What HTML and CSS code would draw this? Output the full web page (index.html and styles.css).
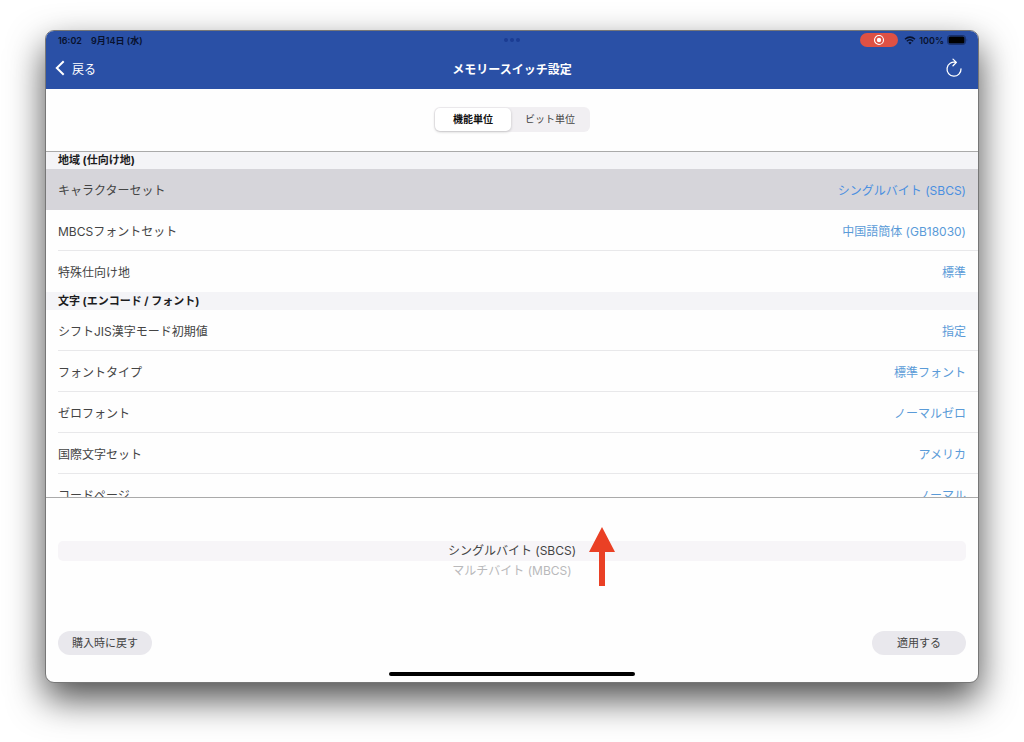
FILE: index.html
```
<!DOCTYPE html>
<html lang="ja">

<head>
    <meta charset="UTF-8">
    <meta name="viewport" content="width=device-width, initial-scale=1.0">
    <title>メモリースイッチ設定</title>
    <link rel="stylesheet" href="styles.css">
</head>

<body>
    <div class="tablet">
        <header class="header">
            <!-- Status bar -->
            <div class="status-bar">
                <div class="status-left">
                    <span>16:02</span>
                    <span>9月14日 (水)</span>
                </div>
                <svg class="dots" viewBox="0 0 18 4" aria-hidden="true">
                    <circle cx="3" cy="2" r="2" />
                    <circle cx="9" cy="2" r="2" />
                    <circle cx="15" cy="2" r="2" />
                </svg>
                <div class="status-right">
                    <span class="recording">
                        <svg viewBox="0 0 12 12" aria-hidden="true">
                            <circle cx="6" cy="6" r="4.5" fill="none" stroke="#fff" stroke-width="1.1" />
                            <circle cx="6" cy="6" r="2.2" fill="#fff" />
                        </svg>
                    </span>
                    <svg class="wifi" viewBox="0 0 12 9" aria-hidden="true">
                        <path d="M1 3.3Q6-1.1 11 3.3M2.8 5.2Q6 2.4 9.2 5.2" fill="none" stroke="currentColor" stroke-width="1.5" />
                        <path d="M4.3 6.7Q6 5.3 7.7 6.7L6 8.6z" fill="currentColor" />
                    </svg>
                    <span>100%</span>
                    <svg class="battery" viewBox="0 0 21 10" aria-hidden="true">
                        <rect x="0.5" y="0.5" width="18" height="9" rx="2.6" fill="none" stroke="#19316f" />
                        <rect x="1.5" y="1.5" width="16" height="7" rx="1.6" fill="#000" />
                        <path d="M19.7 3.6q1.2 1.4 0 2.8z" fill="#19316f" />
                    </svg>
                </div>
            </div>

            <!-- Navigation bar -->
            <nav class="nav-bar">
                <a href="#" class="back">
                    <svg viewBox="0 0 10 16" aria-hidden="true">
                        <path d="M8.7 1.2 1.8 8l6.9 6.8" fill="none" stroke="currentColor" stroke-width="2" />
                    </svg>
                    戻る
                </a>
                <h1>メモリースイッチ設定</h1>
                <button type="button" class="reload" aria-label="再読み込み">
                    <svg viewBox="0 0 18 20" aria-hidden="true">
                        <path d="M16 10.8A7 7 0 1 1 10.8 4.4M8 1.1l3.4 3.3-3.4 3.4" fill="none" stroke="currentColor" stroke-width="1.3" stroke-linecap="round" stroke-linejoin="round" />
                    </svg>
                </button>
            </nav>
        </header>

        <div class="tabs">
            <div class="segmented">
                <label><input type="radio" name="unit" checked><span>機能単位</span></label>
                <label><input type="radio" name="unit"><span>ビット単位</span></label>
            </div>
        </div>

        <main class="settings">
            <section class="group">
                <h2>地域 (仕向け地)</h2>
                <button type="button" class="row selected"><span>キャラクターセット</span><span class="value">シングルバイト (SBCS)</span></button>
                <button type="button" class="row"><span>MBCSフォントセット</span><span class="value">中国語簡体 (GB18030)</span></button>
                <button type="button" class="row"><span>特殊仕向け地</span><span class="value">標準</span></button>
            </section>
            <section class="group">
                <h2>文字 (エンコード / フォント)</h2>
                <button type="button" class="row"><span>シフトJIS漢字モード初期値</span><span class="value">指定</span></button>
                <button type="button" class="row"><span>フォントタイプ</span><span class="value">標準フォント</span></button>
                <button type="button" class="row"><span>ゼロフォント</span><span class="value">ノーマルゼロ</span></button>
                <button type="button" class="row"><span>国際文字セット</span><span class="value">アメリカ</span></button>
                <button type="button" class="row"><span>コードページ</span><span class="value">ノーマル</span></button>
            </section>
        </main>

        <footer class="footer">
            <div class="picker">
                <label><input type="radio" name="charset" checked><span>シングルバイト (SBCS)</span></label>
                <label><input type="radio" name="charset"><span>マルチバイト (MBCS)</span></label>
                <svg class="arrow" viewBox="0 0 26 59" aria-hidden="true">
                    <path d="M13 0 26 25h-10v34h-6V25H0z" fill="#ea4025" />
                </svg>
            </div>
            <div class="actions">
                <button type="button">購入時に戻す</button>
                <button type="button">適用する</button>
            </div>
            <div class="home-indicator"></div>
        </footer>
    </div>
</body>

</html>
```
FILE: styles.css
```
* {
    margin: 0;
    padding: 0;
    box-sizing: border-box;
}

body {
    height: 100vh;
    padding: 30px 45px 59px;
    background-color: #fff;
    font-family: Inter, "Noto Sans CJK JP", sans-serif;
    font-size: 12px;
    color: #444;
    overflow: hidden;
}

button {
    border: none;
    background: none;
    font: inherit;
    color: inherit;
    cursor: pointer;
}

svg {
    display: block;
}

.tablet {
    display: flex;
    flex-direction: column;
    height: 100%;
    border: 1px solid #777;
    border-radius: 9px;
    background-color: #fefefe;
    overflow: hidden;
    box-shadow: 0 16px 36px rgba(0, 0, 0, 0.7);
}

.header {
    background-color: #2a50a6;
    color: #fff;
}

.status-bar,
.nav-bar {
    display: grid;
    grid-template-columns: 1fr auto 1fr;
    align-items: center;
    padding: 0 12px;
}

.status-bar {
    height: 18px;
    font-size: 9px;
    font-weight: 600;
    color: #08122e;
}

.status-left,
.status-right {
    display: flex;
    align-items: center;
}

.status-left {
    gap: 9px;
}

.dots {
    width: 18px;
    height: 4px;
    fill: #1b3c93;
}

.status-right {
    justify-content: flex-end;
    gap: 3px;
    margin-right: -2px;
}

.recording {
    display: flex;
    align-items: center;
    justify-content: center;
    width: 38px;
    height: 14px;
    margin-right: 3px;
    border-radius: 7px;
    background-color: #de5144;
}

.recording svg {
    width: 12px;
    height: 12px;
}

.wifi {
    width: 12px;
    height: 9px;
}

.battery {
    width: 21px;
    height: 10px;
}

.nav-bar {
    height: 40px;
    padding-bottom: 2px;
}

.nav-bar h1 {
    font-size: 12px;
    font-weight: 700;
}

.back {
    display: flex;
    align-items: center;
    gap: 7px;
    margin-left: -3px;
    color: #fff;
    text-decoration: none;
}

.back svg {
    width: 10px;
    height: 16px;
}

.reload {
    justify-self: end;
    margin-right: 3px;
}

.reload svg {
    width: 18px;
    height: 20px;
}

.tabs {
    display: flex;
    justify-content: center;
    padding: 18px 12px 19px;
}

.segmented {
    display: grid;
    grid-template-columns: 76px 78px;
    padding: 1px;
    border-radius: 6px;
    background-color: #f1eff2;
}

.segmented label,
.picker label {
    cursor: pointer;
}

.segmented input,
.picker input {
    position: absolute;
    opacity: 0;
}

.segmented span {
    display: block;
    border-radius: 5px;
    font-size: 10px;
    line-height: 23px;
    text-align: center;
}

.segmented input:checked + span {
    background-color: #fff;
    color: #111;
    font-weight: 700;
    box-shadow: 0 1px 3px rgba(0, 0, 0, 0.2);
}

/* List of switches, scrolls between the tabs and the picker */
.settings {
    flex: 1;
    min-height: 0;
    border-top: 1px solid #aaa;
    border-bottom: 1px solid #aaa;
    overflow-y: auto;
    scrollbar-width: none;
}

.group h2 {
    padding-left: 12px;
    background-color: #f4f4f7;
    font-size: 11px;
    line-height: 17px;
    font-weight: 700;
    color: #1c1c1e;
}

.group + .group h2 {
    border-top: 1px solid #f4f4f7;
}

.row {
    position: relative;
    display: flex;
    align-items: center;
    justify-content: space-between;
    width: 100%;
    height: 41px;
    padding: 0 12px;
}

.row:not(:last-child)::after {
    content: "";
    position: absolute;
    left: 12px;
    right: 0;
    bottom: 0;
    height: 1px;
    background-color: #e8e8ea;
}

.row.selected {
    background-color: #d6d5da;
}

.row.selected::after {
    display: none;
}

.value {
    color: #5a9bd8;
}

.row.selected .value {
    color: #4a8fe0;
}

.footer {
    padding: 43px 12px 6px;
}

.picker {
    position: relative;
    text-align: center;
    line-height: 20px;
}

.picker span {
    display: block;
    border-radius: 5px;
    color: #b9b9bb;
}

.picker input:checked + span {
    background-color: #f7f5f8;
    color: #444;
}

.arrow {
    position: absolute;
    top: -14px;
    left: calc(50% + 77px);
    width: 26px;
    height: 59px;
}

.actions {
    display: flex;
    justify-content: space-between;
    margin-top: 50px;
}

.actions button {
    min-width: 94px;
    padding: 0 12px;
    border-radius: 12px;
    background-color: #e9e8ed;
    font-size: 11px;
    line-height: 24px;
}

.home-indicator {
    width: 27%;
    height: 4px;
    margin: 17px auto 0;
    border-radius: 2px;
    background-color: #000;
}
```
